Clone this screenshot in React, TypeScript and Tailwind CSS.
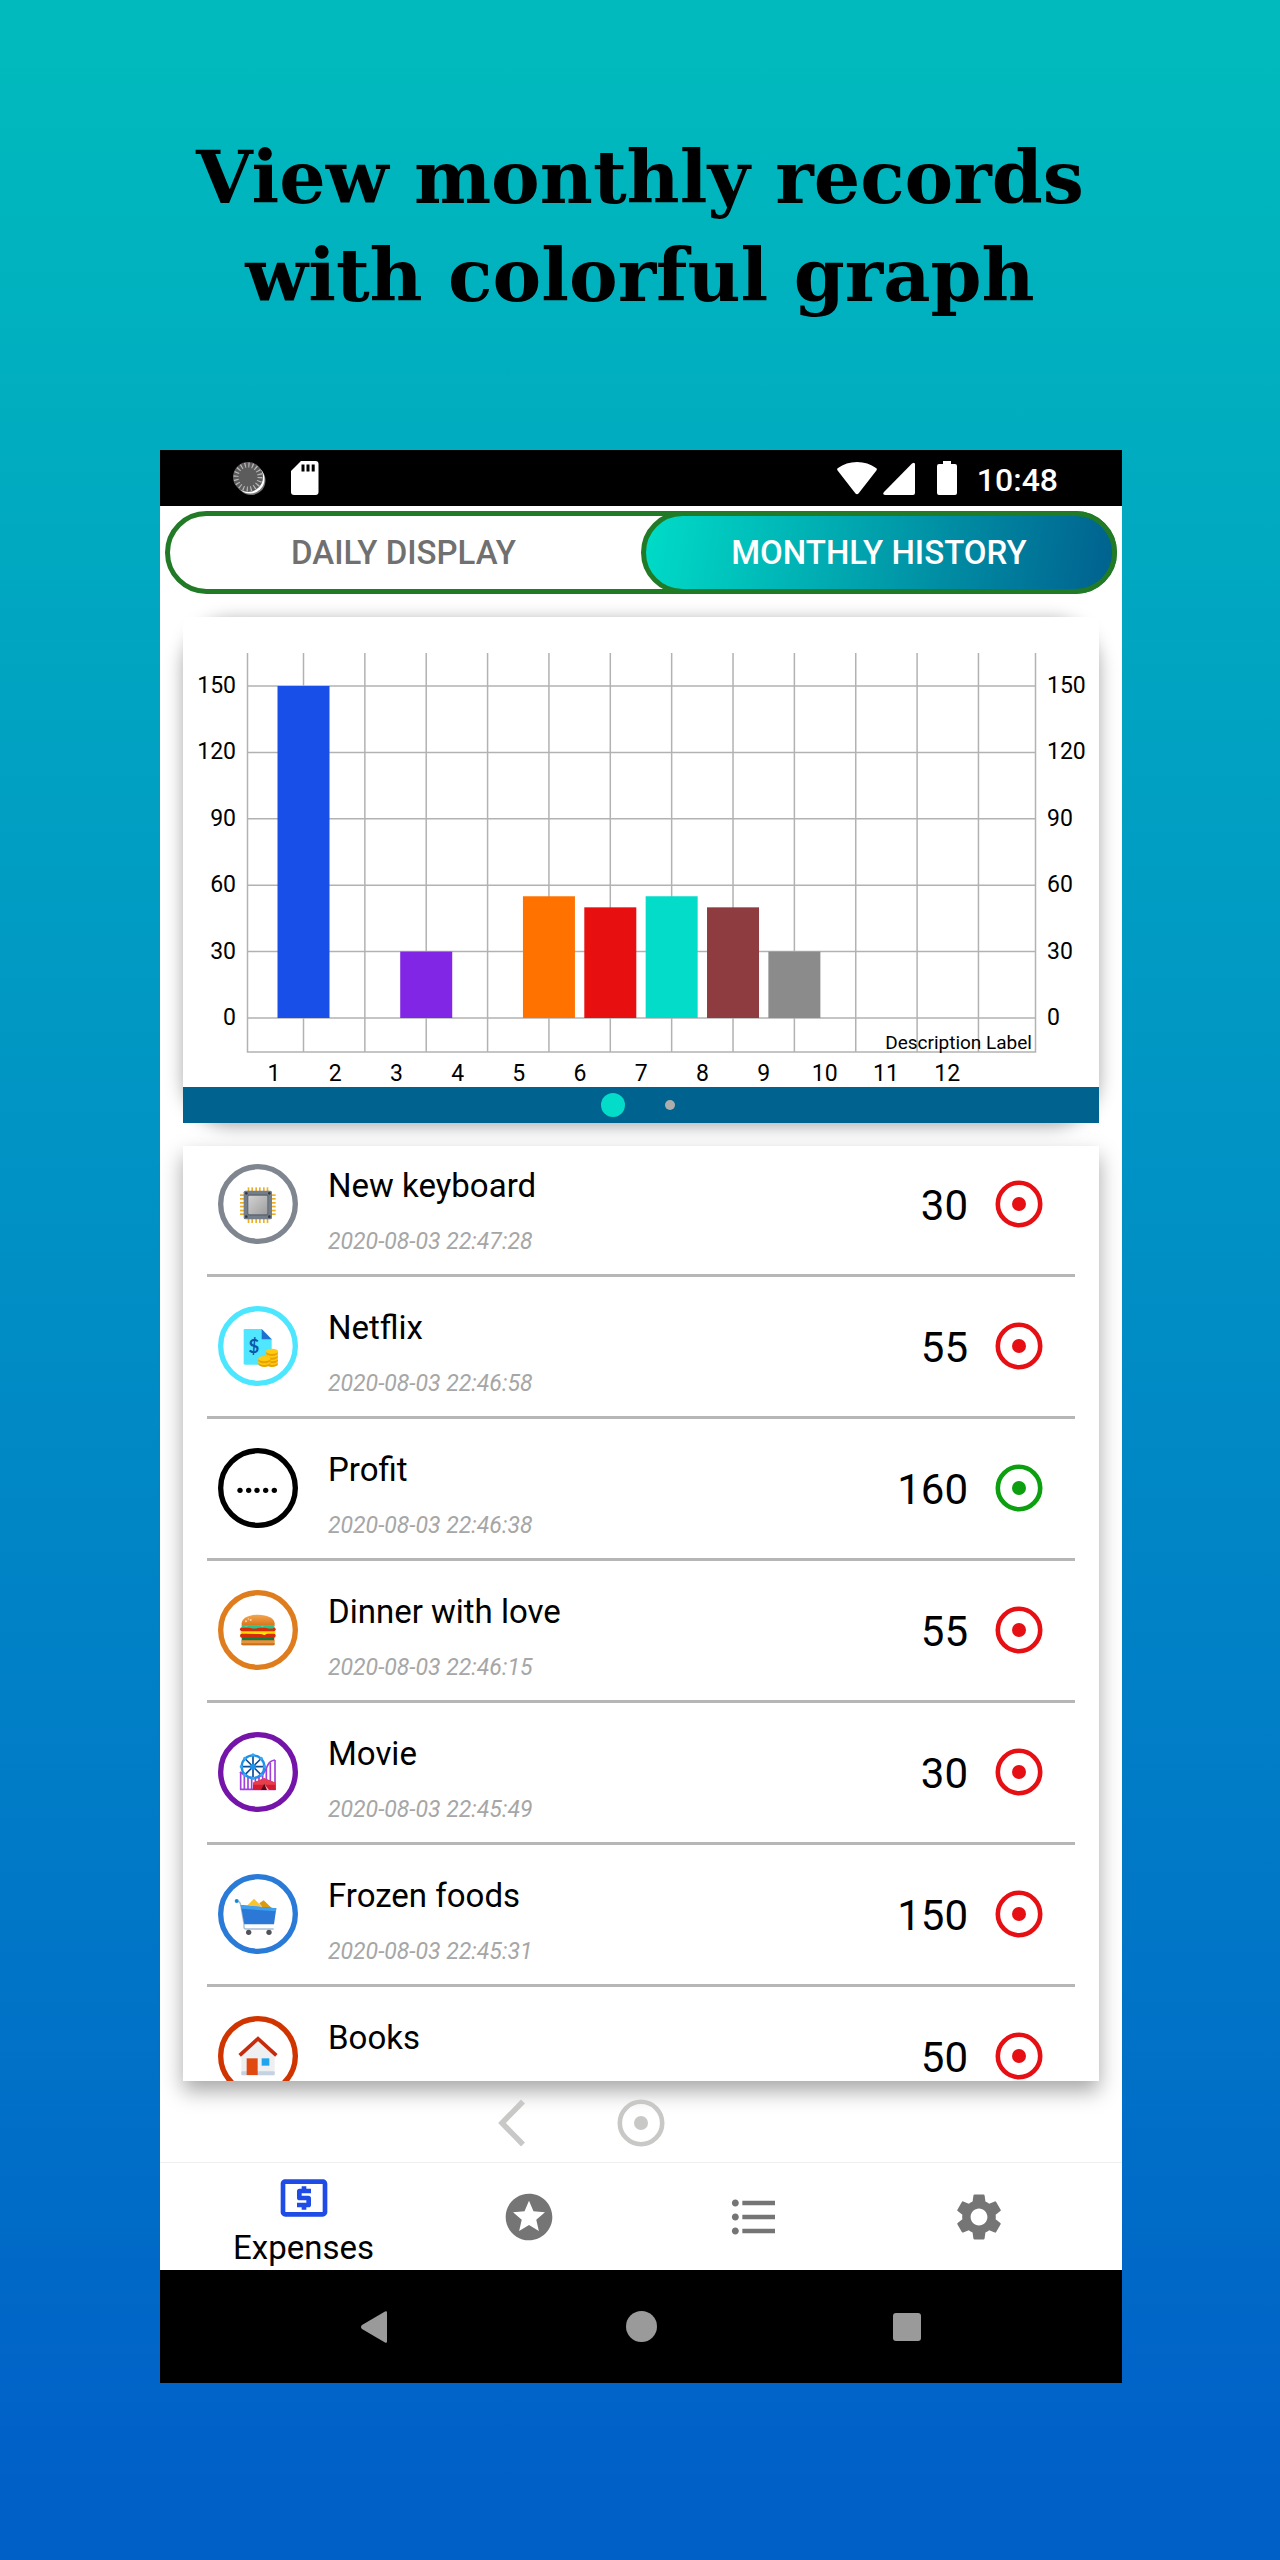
import type { ReactNode } from "react";
import { MdFormatListBulleted, MdLocalAtm, MdSettings, MdStars } from "react-icons/md";

type Kind = "chip" | "bill" | "dots" | "burger" | "park" | "cart" | "house";

const records: { title: string; date?: string; amount: number; kind: Kind; income?: boolean }[] = [
  { title: "New keyboard", date: "2020-08-03 22:47:28", amount: 30, kind: "chip" },
  { title: "Netflix", date: "2020-08-03 22:46:58", amount: 55, kind: "bill" },
  { title: "Profit", date: "2020-08-03 22:46:38", amount: 160, kind: "dots", income: true },
  { title: "Dinner with love", date: "2020-08-03 22:46:15", amount: 55, kind: "burger" },
  { title: "Movie", date: "2020-08-03 22:45:49", amount: 30, kind: "park" },
  { title: "Frozen foods", date: "2020-08-03 22:45:31", amount: 150, kind: "cart" },
  { title: "Books", amount: 50, kind: "house" },
];

const ringColors: Record<Kind, string> = {
  chip: "#7f868f",
  bill: "#4de6ff",
  dots: "#000000",
  burger: "#de7c1e",
  park: "#7414a8",
  cart: "#2a7ad8",
  house: "#d03500",
};

function Coins({ x, y, count }: { x: number; y: number; count: number }) {
  return (
    <g>
      {Array.from({ length: count }, (_, i) => count - 1 - i).map((i) => (
        <g key={i}>
          <ellipse cx={x} cy={y + i * 11 + 5} rx="18" ry="9" fill="#e8a200" />
          <ellipse cx={x} cy={y + i * 11} rx="18" ry="8" fill="#ffca10" />
        </g>
      ))}
    </g>
  );
}

const drawings: Record<Kind, ReactNode> = {
  chip: (
    <g>
      {[92, 103, 115, 126, 138, 149].map((p) => (
        <g key={p} fill="#eeb022">
          <rect x={p - 3} y="70" width="5" height="107" />
          <rect x="66" y={p - 1} width="107" height="5" />
        </g>
      ))}
      <rect x="77" y="80" width="85" height="86" rx="5" fill="#747d8a" />
      <rect x="88" y="91" width="63" height="64" rx="6" fill="#5f6773" />
      <rect x="91" y="95" width="57" height="56" rx="3" fill="url(#chipFace)" />
      {[85, 154].map((x) => [88, 158].map((y) => <circle key={`${x}-${y}`} cx={x} cy={y} r="4" fill="#343941" />))}
      <defs>
        <linearGradient id="chipFace" x1="0" y1="0" x2="1" y2="1">
          <stop offset="0" stopColor="#d2d2d2" />
          <stop offset="1" stopColor="#9e9e9e" />
        </linearGradient>
      </defs>
    </g>
  ),
  bill: (
    <g>
      <path d="M81 69h50l30 31v76H81a4 4 0 0 1-4-4V73a4 4 0 0 1 4-4z" fill="#50e6ff" />
      <path d="M131 69l30 31h-30z" fill="#1f70d0" />
      <text x="108" y="142" textAnchor="middle" fontSize="56" fontWeight="700" fontFamily="Lato, sans-serif" fill="#0f55a8">
        $
      </text>
      <Coins x={162} y={136} count={4} />
      <Coins x={139} y={158} count={2} />
    </g>
  ),
  dots: (
    <g>
      {[66, 92, 117, 143, 169].map((x) => (
        <circle key={x} cx={x} cy="127" r="8" />
      ))}
    </g>
  ),
  burger: (
    <g>
      <path d="M71 107v-7c0-14 20-26 49-26s50 12 50 26v7z" fill="url(#bun)" />
      <g fill="#ffd9a0">
        <circle cx="84" cy="94" r="3" />
        <circle cx="91" cy="87" r="2" />
        <circle cx="98" cy="90" r="3" />
      </g>
      <rect x="71" y="120" width="98" height="34" fill="#e03a10" />
      <rect x="68" y="123" width="104" height="14" fill="#ffd400" />
      <rect x="66" y="112" width="107" height="12" rx="6" fill="#d62c08" />
      <path d="M71 106h98v7q-12 5-24 0t-24 0t-24 0t-26 0z" fill="#1fc990" />
      <rect x="66" y="131" width="107" height="12" rx="6" fill="#d62c08" />
      <path d="M75 128h90l-18 2q-6 8-14 3z" fill="#fff100" />
      <rect x="72" y="143" width="96" height="9" fill="#0d7d45" />
      <path d="M70 151h100v11q0 4-5 4H75q-5 0-5-4z" fill="#e8943c" />
      <path d="M70 160h100v2q0 4-5 4H75q-5 0-5-4z" fill="#c9701c" />
      <defs>
        <linearGradient id="bun" x1="0" y1="0" x2="0" y2="1">
          <stop offset="0" stopColor="#f3a650" />
          <stop offset="1" stopColor="#d9741c" />
        </linearGradient>
      </defs>
    </g>
  ),
  park: (
    <g>
      <g stroke="#a040dc" strokeWidth="5" fill="none">
        <path d="M68 120v54M79 128v46M90 136v38M101 138v36M112 138v36M123 136v38M134 126v48M145 108v66M157 92v82M171 84v90" />
        <path d="M66 172h107M66 120q28 22 56 16q16-6 27-36q6-14 22-16" />
      </g>
      <circle cx="105" cy="104" r="34" fill="#ffffff" stroke="#1f90ea" strokeWidth="7" />
      <path d="M105 72v64M73 104h64M82 81l46 46M128 81l-46 46" stroke="#0b4c94" strokeWidth="5" />
      <circle cx="105" cy="104" r="9" fill="#1f90ea" />
      {[0, 45, 90, 135, 180, 225, 270, 315].map((a) => (
        <circle key={a} cx="105" cy="69" r="5" fill="#39a8f8" transform={`rotate(${a} 105 104)`} />
      ))}
      <path d="M105 152l34-13 34 13v22h-68z" fill="#d41c30" />
      <path d="M105 152l34-13 34 13v6h-68z" fill="#e83e4c" />
      <path d="M139 155l14 19h-24z" fill="#5e0710" />
      <path d="M139 155l14 19h-6z" fill="#ffb0b0" />
    </g>
  ),
  cart: (
    <g>
      <path d="M87 95l21-21 24 24z" fill="#fcc42c" />
      <path d="M124 88l13-9 24 23h-26z" fill="#d99a10" />
      <path d="M56 81q10 0 12 12l10 58v8q0 6 6 6h83" stroke="#a8bdd2" strokeWidth="4" fill="none" />
      <path d="M68 93l107 10-7 48H79z" fill="#2b78d6" />
      <path d="M68 93l107 10-1 9L70 104z" fill="#3fa0ee" />
      <circle cx="56" cy="81" r="6" fill="#1789dc" />
      <circle cx="92" cy="175" r="8" fill="#50545a" />
      <circle cx="153" cy="175" r="8" fill="#50545a" />
    </g>
  ),
  house: (
    <g>
      <path d="M120 72l50 46v60H70v-60z" fill="#eeeff1" />
      <rect x="70" y="166" width="100" height="12" rx="3" fill="#c5d2e2" />
      <path d="M65 118l55-50 55 50" stroke="#c42c0c" strokeWidth="11" fill="none" />
      <rect x="86" y="127" width="33" height="50" fill="#e04a10" />
      <rect x="131" y="127" width="23" height="22" fill="#20a4ee" />
    </g>
  ),
};

function CategoryIcon({ kind }: { kind: Kind }) {
  return (
    <svg viewBox="0 0 240 240" className="size-20 shrink-0" aria-hidden="true">
      <circle cx="120" cy="120" r="112" fill="#ffffff" stroke={ringColors[kind]} strokeWidth="16" />
      {drawings[kind]}
    </svg>
  );
}

function Target({ className }: { className: string }) {
  return (
    <svg viewBox="0 0 48 48" className={`size-12 shrink-0 ${className}`} aria-hidden="true">
      <circle cx="24" cy="24" r="21.2" fill="none" stroke="currentColor" strokeWidth="4.6" />
      <circle cx="24" cy="24" r="7" fill="currentColor" />
    </svg>
  );
}

function StatusBar() {
  return (
    <div className="flex h-14 items-center justify-between bg-black pr-16 pl-[71px] text-white">
      <div className="flex items-center gap-6">
        <svg viewBox="0 0 36 36" className="size-9" aria-hidden="true">
          <circle cx="20" cy="20.500" r="14.500" fill="#777777" />
          <circle cx="19" cy="19" r="14.500" fill="#ffffff" />
          <circle cx="17" cy="17" r="15" fill="#5c5c5c" />
          <circle cx="17" cy="17" r="12" fill="none" stroke="#b8b8b8" strokeWidth="5" strokeDasharray="1.200 2.570" />
        </svg>
        <svg viewBox="0 0 28 34" className="h-[34px] w-7" aria-hidden="true">
          <path d="M10 0h14.500a3 3 0 0 1 3 3v28a3 3 0 0 1-3 3H3a3 3 0 0 1-3-3V10z" fill="#ffffff" />
          <path d="M10.500 3.500h3v7h-3zM15.500 3.500h3v7h-3zM20.700 3.500h3v7h-3z" fill="#000000" />
        </svg>
      </div>
      <div className="flex items-center">
        <svg viewBox="0 0 40 34" className="mr-[6px] h-[34px] w-10" aria-hidden="true">
          <path d="M1 7Q9 1 20 1t19 6q1.500 1 .4 2.500L21.500 32.500q-1.500 1.500-3 0L.6 9.500Q-.5 8 1 7z" fill="#ffffff" />
        </svg>
        <svg viewBox="0 0 34 34" className="mr-5 h-[34px] w-[34px]" aria-hidden="true">
          <path d="M1 31L29 2.500q3-2 3 1V32q0 2-2 2H2q-3-.5-1-3z" fill="#ffffff" />
        </svg>
        <svg viewBox="0 0 20 34" className="mr-5 h-[34px] w-5" aria-hidden="true">
          <path d="M6 0h8v3h4q2 0 2 2v27q0 2-2 2H2q-2 0-2-2V5q0-2 2-2h4z" fill="#ffffff" />
        </svg>
        <span className="pt-[3px] text-[32px] leading-10 font-medium">10:48</span>
      </div>
    </div>
  );
}

const barSeries = [
  { month: 1, value: 150, color: "#184fe8" },
  { month: 3, value: 30, color: "#8026e4" },
  { month: 5, value: 55, color: "#ff7200" },
  { month: 6, value: 50, color: "#e80f10" },
  { month: 7, value: 55, color: "#02dcc8" },
  { month: 8, value: 50, color: "#8f3c40" },
  { month: 9, value: 30, color: "#8b8b8b" },
];

function Chart() {
  const left = 64;
  const right = 852;
  const baseline = 401;
  const unit = 66.4 / 30;
  const step = 61.36;
  const labels = Array.from({ length: 12 }, (_, i) => i + 1);
  return (
    <svg viewBox="0 0 916 470" className="block w-full" role="img" aria-label="Monthly expenses bar chart" fontFamily="Roboto, sans-serif">
      <g stroke="#b2b2b2" strokeWidth="1.500">
        {[0, 30, 60, 90, 120, 150].map((v) => (
          <line key={v} x1={left} x2={right} y1={baseline - v * unit} y2={baseline - v * unit} />
        ))}
        {labels.map((m) => (
          <line key={m} x1={120.5 + (m - 1) * step} x2={120.5 + (m - 1) * step} y1="36" y2="435" />
        ))}
        <path d="M64.500 36V435H852.500V36" fill="none" />
      </g>
      {barSeries.map((b) => (
        <rect key={b.month} x={94.5 + (b.month - 1) * step} y={baseline - b.value * unit} width="52" height={b.value * unit} fill={b.color} />
      ))}
      <g fontSize="23">
        {[0, 30, 60, 90, 120, 150].map((v) => (
          <g key={v}>
            <text x="53" y={baseline + 7 - v * unit} textAnchor="end">{v}</text>
            <text x="864" y={baseline + 7 - v * unit}>{v}</text>
          </g>
        ))}
        {labels.map((m) => (
          <text key={m} x={91 + (m - 1) * 61.2} y="464" textAnchor="middle">{m}</text>
        ))}
      </g>
      <text x="849" y="432" textAnchor="end" fontSize="19">Description Label</text>
    </svg>
  );
}

const tabs = [
  { label: "Favourites", Icon: MdStars },
  { label: "List", Icon: MdFormatListBulleted },
  { label: "Settings", Icon: MdSettings },
];

export default function App() {
  return (
    <main className="min-h-screen bg-linear-to-b from-[#00babd] from-2% to-[#0060c8] to-97% pt-32 pb-[177px] font-[Roboto,sans-serif] text-black">
      <h1 className="mb-[126px] text-center font-['DejaVu_Serif',serif] text-[73px] leading-[98px] font-bold">
        View monthly records
        <br />
        with colorful graph
      </h1>

      <div className="mr-[158px] ml-40 bg-white">
        <StatusBar />

        <div role="tablist" className="mx-[5px] mt-[5px] grid h-[83px] grid-cols-2 rounded-full border-[5px] border-[#217a26] text-[33px] font-medium">
          <button role="tab" aria-selected="false" className="pr-1 text-[#707070]">DAILY DISPLAY</button>
          <button role="tab" aria-selected="true" className="-my-[5px] -mr-[5px] rounded-full border-[5px] border-[#217a26] bg-linear-[100deg] from-[#00dcc8] to-[#00618f] text-white">
            MONTHLY HISTORY
          </button>
        </div>

        <section className="mx-[23px] mt-[23px] rounded-[48px] shadow-[0_3px_18px_rgba(0,0,0,0.35)]">
          <div className="bg-white">
            <Chart />
            <div className="flex h-9 items-center justify-center gap-10 bg-[#00628f] pr-[6px]">
              <button aria-label="Page 1" className="size-6 rounded-full bg-[#02dcc8]" />
              <button aria-label="Page 2" className="size-[10px] rounded-full bg-[#adadad]" />
            </div>
          </div>
        </section>

        <section className="mx-[23px] mt-[23px] shadow-[0_10px_20px_rgba(0,0,0,0.35)]">
          <ul className="max-h-[935px] overflow-hidden bg-white px-6">
            {records.map((r) => (
              <li key={r.title} className="flex h-[142px] items-start border-b-[3px] border-[#b6b6b6] pt-[29px] pr-8 pl-[11px] first:h-[131px] first:pt-[18px]">
                <CategoryIcon kind={r.kind} />
                <div className="ml-[30px] flex-1 pt-[2px]">
                  <p className="text-[33px] leading-10">{r.title}</p>
                  {r.date && <p className="mt-[22px] text-[23px] leading-7 text-[#a6a6a6] italic">{r.date}</p>}
                </div>
                <div className="flex h-20 items-center gap-[27px]">
                  <span className="pt-[3px] text-[42px] leading-12">{r.amount}</span>
                  <Target className={r.income ? "text-[#0c9f10]" : "text-[#e61014]"} />
                </div>
              </li>
            ))}
          </ul>
        </section>

        <div className="grid h-[82px] grid-cols-[1fr_48px_1fr] items-center border-b border-[#efefef] pt-[3px] text-[#c8c8c6]">
          <button aria-label="Previous" className="mr-[91px] justify-self-end">
            <svg viewBox="0 0 28 48" className="h-12 w-7" aria-hidden="true">
              <path d="M25 2.500L4 24l21 21.500" fill="none" stroke="currentColor" strokeWidth="5.500" />
            </svg>
          </button>
          <button aria-label="Today">
            <Target className="" />
          </button>
        </div>

        <nav className="grid h-[107px] grid-cols-4 px-[31px] text-[#757575]">
          <button className="flex flex-col items-center gap-[2px] pt-[7px] text-[#1f4be6]">
            <MdLocalAtm className="size-14" />
            <span className="text-[33px] leading-10 text-black">Expenses</span>
          </button>
          {tabs.map(({ label, Icon }) => (
            <button key={label} aria-label={label} className="flex items-center justify-center">
              <Icon className="size-14" />
            </button>
          ))}
        </nav>

        <div className="grid h-[113px] grid-cols-3 bg-black px-[82px] text-[#9a9a9a]">
          <button aria-label="Back" className="flex items-center justify-center">
            <svg viewBox="0 0 32 32" className="size-8" aria-hidden="true">
              <path d="M28 1.500v29q0 2-2 1L3 18q-2-2 0-4L26 .5q2-1 2 1z" fill="currentColor" />
            </svg>
          </button>
          <button aria-label="Home" className="flex items-center justify-center">
            <span className="size-[31px] rounded-full bg-current" />
          </button>
          <button aria-label="Recent apps" className="flex items-center justify-center">
            <span className="size-7 rounded-[3px] bg-current" />
          </button>
        </div>
      </div>
    </main>
  );
}
